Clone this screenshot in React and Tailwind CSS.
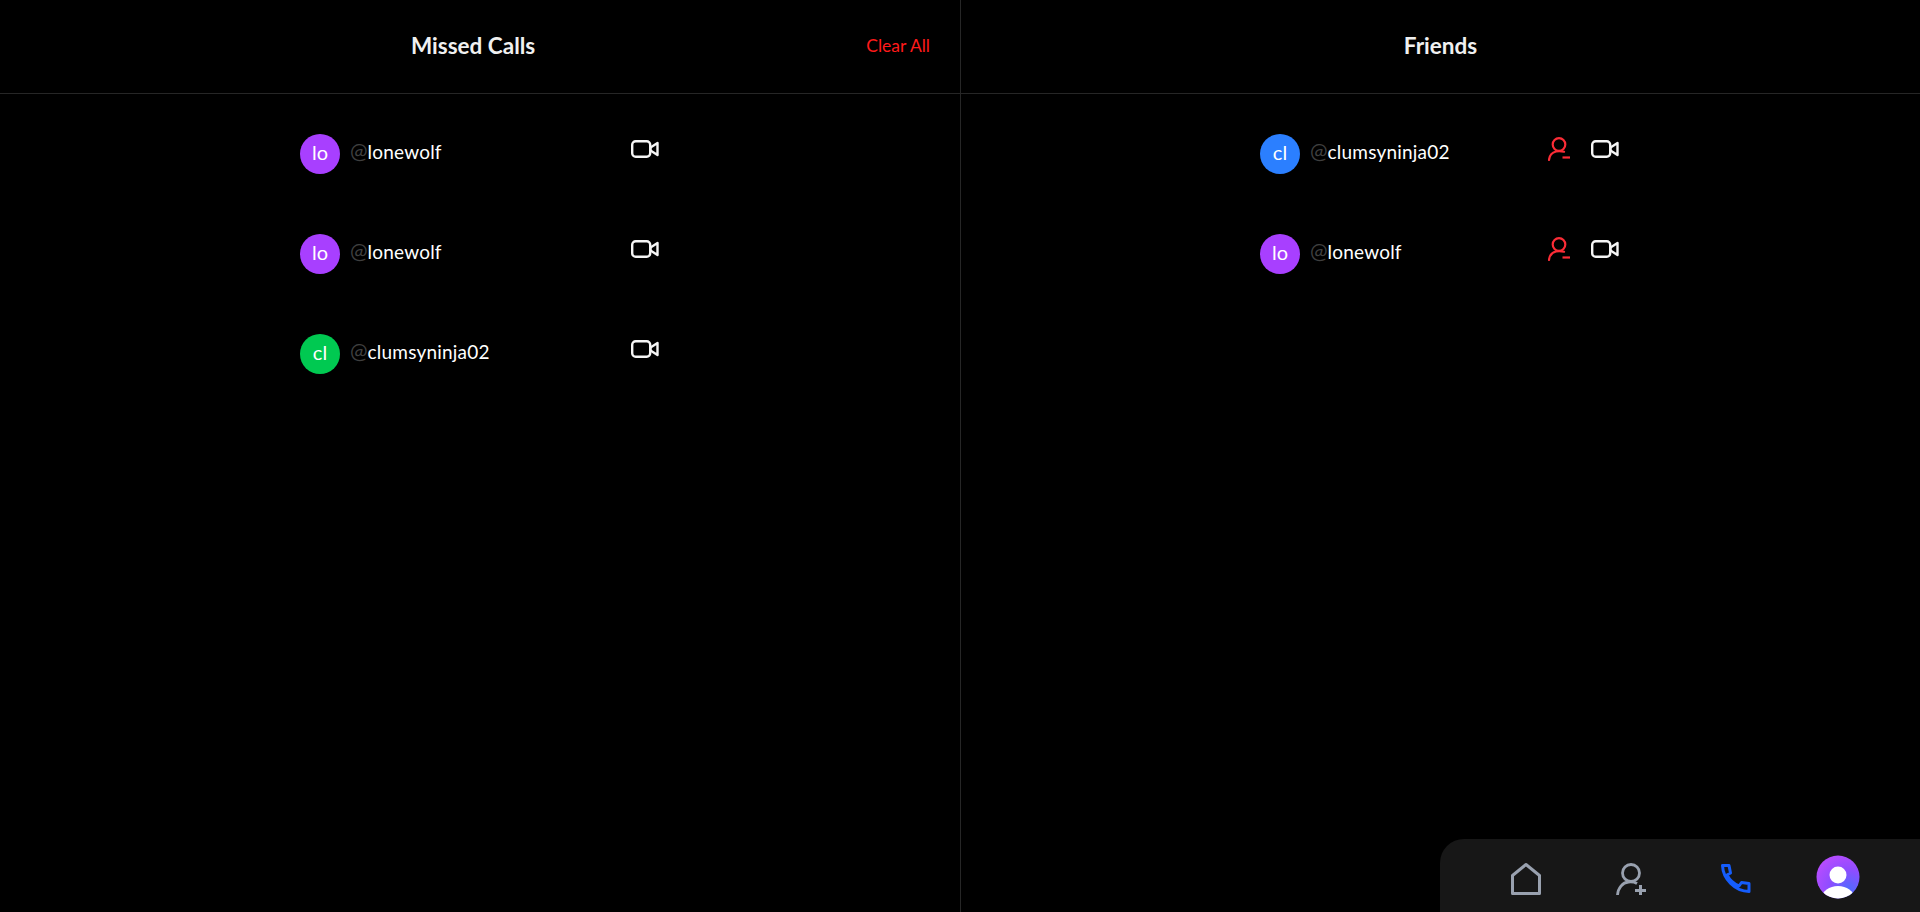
const FONT = "font-['Lato','Liberation_Sans',sans-serif]";

const MISSED = [
  { name: "lonewolf", color: "bg-[#a83fff]" },
  { name: "lonewolf", color: "bg-[#a83fff]" },
  { name: "clumsyninja02", color: "bg-[#00c951]" },
];

const FRIENDS = [
  { name: "clumsyninja02", color: "bg-[#2b7fff]" },
  { name: "lonewolf", color: "bg-[#a83fff]" },
];

function VideoIcon() {
  return (
    <svg width="28" height="18" viewBox="0 0 28 18" fill="none" stroke="#f5f5f5" strokeWidth="2.400" strokeLinejoin="round">
      <rect x="1.200" y="1.200" width="18" height="15.600" rx="3.500" />
      <path d="M19.500 7.500 26.500 3v12l-7-4.500z" />
    </svg>
  );
}

function PersonMinusIcon() {
  return (
    <svg width="23" height="24" viewBox="0 0 23 24" fill="none" stroke="#fb2c36" strokeWidth="2.200" strokeLinecap="round">
      <circle cx="11" cy="7.500" r="6.300" />
      <path d="M1 23c.4-4 3-7.500 7-8.500 2.500-.6 5-.5 8 .2" />
      <path d="M14.500 20.500h7.500" strokeLinecap="butt" />
    </svg>
  );
}

function HomeIcon() {
  return (
    <svg width="30" height="32" viewBox="0 0 30 32" fill="none" stroke="#99a1af" strokeWidth="3" strokeLinejoin="round">
      <path d="M15 1.500 1.500 12.500v18h27v-18z" />
    </svg>
  );
}

function PersonPlusIcon() {
  return (
    <svg width="30" height="32" viewBox="0 0 30 32" fill="none" stroke="#99a1af" strokeWidth="2.800">
      <circle cx="15" cy="10" r="8.500" />
      <path d="M1.500 32c.5-7 5-12.500 11-13 3-.3 6 0 8.500 1.500" />
      <path d="M19 27.500h11M24.500 22v11" strokeWidth="3" />
    </svg>
  );
}

function PhoneIcon() {
  return (
    <svg width="30" height="30" viewBox="0 0 30 30" fill="none" stroke="#155dfc" strokeWidth="3" strokeLinejoin="round">
      <path d="M1.500 1.500h6.500l1.500 7.500-3.500 2c2.500 5 7 9 12 11l2.500-3.500 7.500 1v8C14 27.500 2 15 1.500 1.500z" />
    </svg>
  );
}

function AvatarIcon() {
  return (
    <svg width="44" height="44" viewBox="0 0 44 44">
      <defs>
        <radialGradient id="avatarFill" cx="0.75" cy="0.8" r="0.85">
          <stop offset="0" stopColor="#4f6bff" />
          <stop offset="0.55" stopColor="#8f4dff" />
          <stop offset="1" stopColor="#b44cff" />
        </radialGradient>
        <clipPath id="avatarClip">
          <circle cx="22" cy="22" r="21.500" />
        </clipPath>
      </defs>
      <circle cx="22" cy="22" r="21.500" fill="url(#avatarFill)" />
      <g clipPath="url(#avatarClip)" fill="#fff">
        <circle cx="22" cy="20" r="8.500" />
        <ellipse cx="22" cy="43" rx="16" ry="12" />
      </g>
    </svg>
  );
}

function UserRow({ user, showRemove }) {
  return (
    <div className="flex h-10 w-[360px] items-center justify-between">
      <div className="flex items-center gap-2.5">
        <div className={`flex h-10 w-10 items-center justify-center rounded-full pb-1 text-[20px] text-white ${user.color}`}>
          {user.name.slice(0, 2)}
        </div>
        <p className="mb-1.5 text-[19px] tracking-[0.2px] text-white">
          <span className="text-[21px] tracking-normal text-[#3f3f3f]">@</span>
          {user.name}
        </p>
      </div>
      <div className="mb-2.5 flex items-center gap-5 pr-px">
        {showRemove && <PersonMinusIcon />}
        <VideoIcon />
      </div>
    </div>
  );
}

export default function App() {
  return (
    <div className={`relative grid h-[912px] grid-cols-2 overflow-hidden bg-black ${FONT}`}>
      {/* Missed calls */}
      <div>
        <div className="flex h-[94px] items-center justify-between border-b border-[#262626] pr-[30px] pl-[411px]">
          <h2 className="mb-0.5 text-[22.5px] font-bold text-[#f0f0f0]">Missed Calls</h2>
          <button className="text-[17.5px] text-[#ff1a1a]">Clear All</button>
        </div>
        <div className="flex flex-col gap-[60px] pt-10 pl-[300px]">
          {MISSED.map((user, i) => (
            <UserRow key={i} user={user} />
          ))}
        </div>
      </div>

      {/* Friends */}
      <div className="border-l border-[#262626]">
        <div className="flex h-[94px] items-center justify-center border-b border-[#262626]">
          <h2 className="mb-0.5 text-[22.5px] font-bold text-[#f0f0f0]">Friends</h2>
        </div>
        <div className="flex flex-col gap-[60px] pt-10 pl-[299px]">
          {FRIENDS.map((user, i) => (
            <UserRow key={i} user={user} showRemove />
          ))}
        </div>
      </div>

      {/* Bottom nav */}
      <div className="absolute right-0 bottom-0 flex h-[73px] w-[480px] items-center rounded-tl-3xl bg-[#171717] pl-[33px]">
        <button className="mt-1.5 flex w-[105px] justify-center">
          <HomeIcon />
        </button>
        <button className="mt-1.5 flex w-[105px] justify-center">
          <PersonPlusIcon />
        </button>
        <button className="mt-1.5 flex w-[105px] justify-center">
          <PhoneIcon />
        </button>
        <button className="mt-0.5 flex w-[100px] justify-center">
          <AvatarIcon />
        </button>
      </div>
    </div>
  );
}
